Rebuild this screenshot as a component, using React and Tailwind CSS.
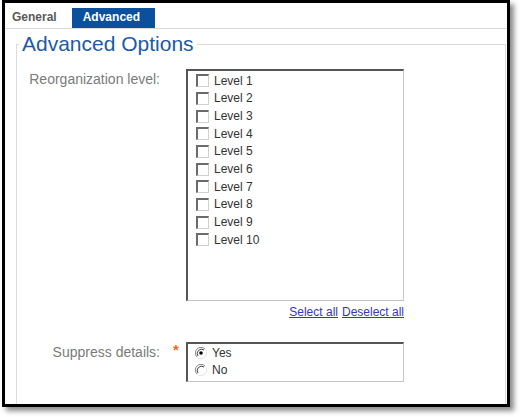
import React from "react";

const levels = ["Level 1", "Level 2", "Level 3", "Level 4", "Level 5", "Level 6", "Level 7", "Level 8", "Level 9", "Level 10"];

const Checkbox = () => (
  <span className="block w-[13px] h-[13px] bg-white border-t-2 border-l-2 border-r border-b border-t-[#6b6b6b] border-l-[#6b6b6b] border-r-[#d0d0d0] border-b-[#d0d0d0]" />
);

const Radio = ({ checked }) => (
  <svg width="12" height="12" viewBox="0 0 12 12" className="block">
    <circle cx="6" cy="6" r="5.5" fill="#fff" />
    <path d="M10 2 A5.5 5.5 0 0 0 2 10" fill="none" stroke="#8a8a8a" strokeWidth="1" />
    <path d="M9 3 A4.3 4.3 0 0 0 3 9" fill="none" stroke="#404040" strokeWidth="1" />
    <path d="M2 10 A5.5 5.5 0 0 0 10 2" fill="none" stroke="#e6e6e6" strokeWidth="1" />
    {checked && <circle cx="6" cy="6" r="1.8" fill="#000" />}
  </svg>
);

export default function App() {
  return (
    <div className="w-[522px] h-[417px] bg-white font-['Liberation_Sans',Arial,sans-serif]">
      <div className="ml-[2px] w-[508px] h-[407px] border-[3px] border-black bg-white overflow-hidden shadow-[4px_4px_5px_rgba(0,0,0,0.45)]">
        {/* tabs */}
        <div className="h-[26px] flex items-end pl-[7px] border-b border-[#dadada]">
          <span className="h-[20px] leading-[20px] text-[12px] font-bold text-[#5a5a5a] mb-[1px]">General</span>
          <span className="ml-[15px] w-[83px] h-[20px] leading-[19px] pl-[11px] text-[12px] font-bold text-white bg-[#0c4f9d]">Advanced</span>
        </div>

        <fieldset className="ml-[11px] mr-[1px] mt-[3px] border border-[#dcdcdc] pb-[60px]">
          <legend className="ml-[2px] px-[3px] text-[21px] leading-[24px] text-[#1b5aa7]">Advanced Options</legend>

          <div className="grid grid-cols-[143px_26px_218px] pt-[13px]">
            <div className="text-right text-[14px] leading-[16px] text-[#7b7b7b] mt-[2px]">Reorganization level:</div>
            <div />
            <div>
              <div className="h-[232px] bg-white border-t-2 border-l-2 border-r border-b border-t-[#555] border-l-[#555] border-r-[#c8c8c8] border-b-[#c4c4c4] pt-[1px]">
                {levels.map((l) => (
                  <div key={l} className="h-[17.67px] flex items-center pl-[8px] gap-[5px]">
                    <Checkbox />
                    <span className="text-[12px] leading-[14px] text-[#333]">{l}</span>
                  </div>
                ))}
              </div>
              <div className="mt-[4px] flex justify-end gap-[4px] text-[12px] leading-[14px] text-[#3535c8] underline">
                <a href="#">Select all</a>
                <a href="#">Deselect all</a>
              </div>
            </div>

            <div className="mt-[25px] text-right text-[14px] leading-[16px] text-[#7b7b7b]">Suppress details:</div>
            <div className="mt-[23px] pl-[13px] text-[15px] leading-[16px] font-bold text-[#f26a1b]">*</div>
            <div className="mt-[23px]">
              <div className="h-[40px] bg-white border-t-2 border-l-2 border-r border-b border-t-[#555] border-l-[#555] border-r-[#c8c8c8] border-b-[#c4c4c4]">
                <div className="h-[17px] flex items-center pl-[7px] gap-[5px]">
                  <Radio checked />
                  <span className="text-[12px] leading-[14px] text-[#333]">Yes</span>
                </div>
                <div className="h-[17px] flex items-center pl-[7px] gap-[5px]">
                  <Radio />
                  <span className="text-[12px] leading-[14px] text-[#333]">No</span>
                </div>
              </div>
            </div>
          </div>
        </fieldset>
      </div>
    </div>
  );
}
